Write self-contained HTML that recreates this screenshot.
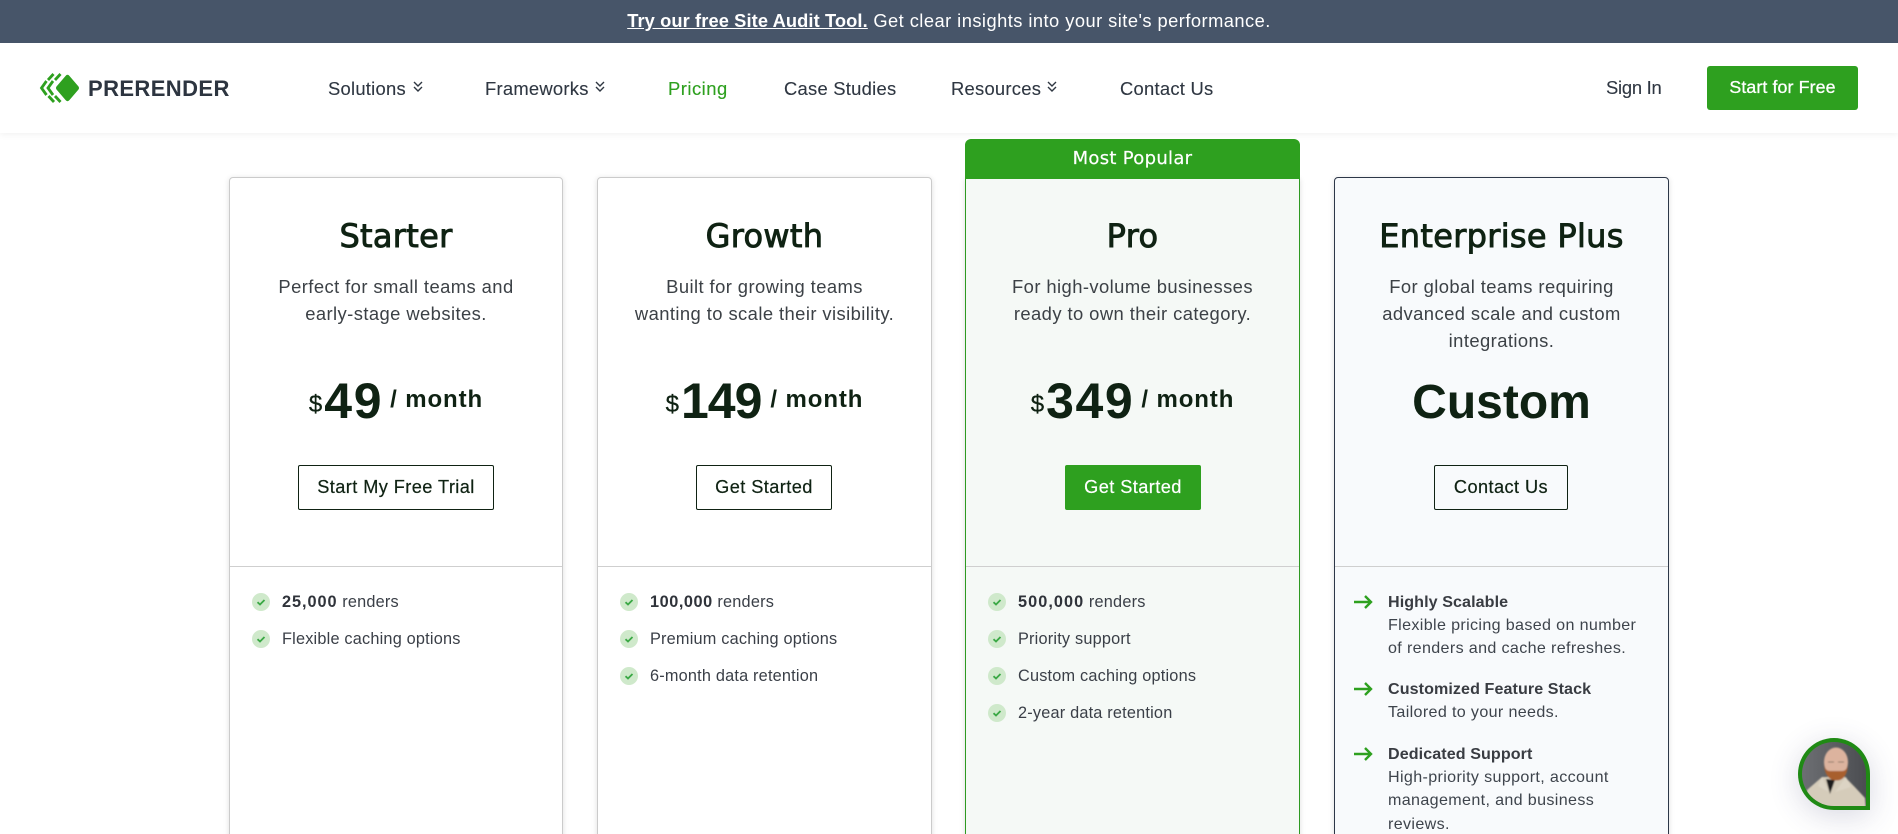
<!DOCTYPE html>
<html lang="en"><head><meta charset="utf-8"><title>Prerender Pricing</title>
<style>
*{box-sizing:border-box;margin:0;padding:0}
html,body{width:1898px;height:834px;background:#fff;font-family:"Liberation Sans",sans-serif}
#page{position:relative;width:1898px;height:834px;overflow:hidden;background:#fff}
a{text-decoration:none;color:inherit}
.banner{position:absolute;left:0;top:0;width:1898px;height:43px;background:#475569;color:#fff;text-align:center;font-size:18.3px;line-height:42px;letter-spacing:.46px}
.banner a{font-weight:700;text-decoration:underline;letter-spacing:.1px}
header{position:absolute;left:0;top:43px;width:1898px;height:90px;background:#fff;box-shadow:0 2px 6px rgba(0,0,0,.05);z-index:3}
header a,header svg,.wordmark{position:absolute}
.wordmark{left:88px;top:33px;font:700 22px/26px "Liberation Sans",sans-serif;color:#2d3540;letter-spacing:.4px}
.nav{top:34px;font-size:18.4px;line-height:24px;color:#2f3742;letter-spacing:.25px;white-space:nowrap;-webkit-text-stroke:.12px #2f3742}
.cta{left:1707px;top:23px;width:151px;height:44px;background:#2ea01f;border-radius:3px;color:#fff;text-align:center;font-size:17.8px;line-height:43px;font-weight:400;-webkit-text-stroke:.3px #fff;letter-spacing:.1px}
.badge{position:absolute;left:965px;top:139px;width:335px;height:40px;background:#2ea01f;border-radius:6px 6px 0 0;color:#fff;text-align:center;font:400 18px/39px "DejaVu Sans",sans-serif;letter-spacing:.3px;-webkit-text-stroke:.2px #fff;z-index:2}
.card{position:absolute;top:177px;width:335px;height:665px;background:#fff;border:1px solid #cbcbcb;border-radius:4px;box-shadow:0 1px 6px rgba(0,0,0,.13);color:#0f2213;text-align:center}
.card.pro{background:#f5f9f6;border-color:#2e9a22;left:965px;width:335px;top:178px;border-radius:0 0 4px 4px;z-index:1}
.card.ent{background:#f8fafc;border-color:#2d3748}
.card>*{position:absolute;left:0;right:0}
h2{top:39px;font:400 32px/38px "DejaVu Sans",sans-serif;letter-spacing:.3px;-webkit-text-stroke:.9px #0f2213;white-space:nowrap}
.desc{top:95px;font-size:18.4px;line-height:27px;color:#3c4146;letter-spacing:.42px}
.price{top:193px;height:60px;display:flex;justify-content:center;align-items:baseline;line-height:60px;white-space:nowrap}
.price .d{font-size:24px;font-weight:400;-webkit-text-stroke:.3px #0f2213;position:relative;top:-6px;margin-right:2px}
.price .n{font-size:50px;font-weight:700;letter-spacing:1.6px;margin-right:7px}
.price .n.t{letter-spacing:-1px;margin-right:9px}
.price .m{font-size:24px;font-weight:700;letter-spacing:.9px;position:relative;top:-11px}
.custom{top:195px;height:60px;font-size:48px;font-weight:700;line-height:60px}
.btn{right:auto;top:287px;height:45px;border:1px solid #0f2213;border-radius:2px;font-size:18.2px;line-height:43px;color:#0f2213;letter-spacing:.42px;white-space:nowrap;text-align:center;-webkit-text-stroke:.2px #0f2213}
.btn.g{background:#2ea01f;border-color:#2ea01f;color:#fff;-webkit-text-stroke:.2px #fff}
hr{top:388px;border:0;border-top:1px solid #cfcfcf;height:0}
ul{top:414px;list-style:none;text-align:left;padding-left:22px}
ul li{height:37px;position:relative;padding-left:30px;font-size:16.3px;line-height:20px;color:#3a3f47;letter-spacing:.2px;white-space:nowrap}
ul li svg{position:absolute;left:0;top:1px}
b{font-weight:700;color:#2f333a;letter-spacing:.95px}
.fe{position:absolute;left:53px;right:0;text-align:left;font-size:16.1px;line-height:23.7px;color:#3e444c;letter-spacing:.35px;white-space:nowrap}
.fe b{color:#393c42;letter-spacing:.08px;position:relative;top:1px}
.ar{position:absolute;right:auto}
.chat{position:absolute;left:1798px;top:738px;width:72px;height:72px;border-radius:50% 50% 0 50%;background:#1f8a14;padding:4px;box-shadow:0 6px 30px rgba(60,60,110,.2);z-index:5}
.chat svg{display:block;border-radius:50% 50% 0 50%}
</style></head><body><div id="page">
<div class="banner"><a href="#">Try our free Site Audit Tool.</a> Get clear insights into your site's performance.</div>
<header>
<svg style="left:0;top:-43px" width="100" height="133" fill="none">
<path d="M67.500 74.800q1 0 2 1.200l9 10.500q1 1.500 0 3l-9 10.500q-1 1.200-2 1.200t-2-1.200l-9-10.500q-1-1.500 0-3l9-10.500q1-1.200 2-1.200z" fill="#2ea01f"/>
<g stroke="#2ea01f" stroke-width="2.800"><path d="M46.500 81l-5 7 5 7M53 81l-5 7 5 7M48 80l5.500-6M55 80l5.500-6M48.500 96l5.500 6M55 96l5.500 6"/></g>
</svg>
<span class="wordmark">PRERENDER</span>
<a class="nav" style="left:328px" href="#">Solutions</a>
<svg style="left:411.500px;top:38px" width="12" height="12" fill="none" stroke="#2f3742" stroke-width="1.400"><path d="M2 1l4 4 4-4M2 6l4 4 4-4"/></svg>
<a class="nav" style="left:485px" href="#">Frameworks</a>
<svg style="left:594px;top:38px" width="12" height="12" fill="none" stroke="#2f3742" stroke-width="1.400"><path d="M2 1l4 4 4-4M2 6l4 4 4-4"/></svg>
<a class="nav" style="left:668px;color:#2ea01f;-webkit-text-stroke:.12px #2ea01f;letter-spacing:.5px" href="#">Pricing</a>
<a class="nav" style="left:784px" href="#">Case Studies</a>
<a class="nav" style="left:951px" href="#">Resources</a>
<svg style="left:1046px;top:38px" width="12" height="12" fill="none" stroke="#2f3742" stroke-width="1.400"><path d="M2 1l4 4 4-4M2 6l4 4 4-4"/></svg>
<a class="nav" style="left:1120px" href="#">Contact Us</a>
<a class="nav" style="left:1606px;top:33px;letter-spacing:-.25px" href="#">Sign In</a>
<a class="cta" href="#">Start for Free</a>
</header>

<section class="card" style="left:229px;width:334px">
<h2>Starter</h2>
<p class="desc">Perfect for small teams and<br>early-stage websites.</p>
<div class="price"><span class="d">$</span><span class="n">49</span><span class="m">/ month</span></div>
<a class="btn" href="#" style="left:68px;width:196px">Start My Free Trial</a>
<hr>
<ul>
<li><svg width="18" height="18"><circle cx="9" cy="9" r="9" fill="#cfe9cb"/><path d="M5.500 9.200l2.500 2.300 4.500-4.500" fill="none" stroke="#3aa845" stroke-width="1.800"/></svg><b>25,000</b> renders</li>
<li><svg width="18" height="18"><circle cx="9" cy="9" r="9" fill="#cfe9cb"/><path d="M5.500 9.200l2.500 2.300 4.500-4.500" fill="none" stroke="#3aa845" stroke-width="1.800"/></svg>Flexible caching options</li>
</ul>
</section>

<section class="card" style="left:597px">
<h2>Growth</h2>
<p class="desc">Built for growing teams<br>wanting to scale their visibility.</p>
<div class="price"><span class="d">$</span><span class="n t">149</span><span class="m">/ month</span></div>
<a class="btn" href="#" style="left:98px;width:136px">Get Started</a>
<hr>
<ul>
<li><svg width="18" height="18"><circle cx="9" cy="9" r="9" fill="#cfe9cb"/><path d="M5.500 9.200l2.500 2.300 4.500-4.500" fill="none" stroke="#3aa845" stroke-width="1.800"/></svg><b style="letter-spacing:.55px">100,000</b> renders</li>
<li><svg width="18" height="18"><circle cx="9" cy="9" r="9" fill="#cfe9cb"/><path d="M5.500 9.200l2.500 2.300 4.500-4.500" fill="none" stroke="#3aa845" stroke-width="1.800"/></svg>Premium caching options</li>
<li><svg width="18" height="18"><circle cx="9" cy="9" r="9" fill="#cfe9cb"/><path d="M5.500 9.200l2.500 2.300 4.500-4.500" fill="none" stroke="#3aa845" stroke-width="1.800"/></svg>6-month data retention</li>
</ul>
</section>

<div class="badge">Most Popular</div>
<section class="card pro">
<h2 style="top:38px">Pro</h2>
<p class="desc" style="top:94px">For high-volume businesses<br>ready to own their category.</p>
<div class="price" style="top:192px"><span class="d">$</span><span class="n">349</span><span class="m">/ month</span></div>
<a class="btn g" href="#" style="top:286px;left:99px;width:136px">Get Started</a>
<hr style="top:387px">
<ul style="top:413px">
<li><svg width="18" height="18"><circle cx="9" cy="9" r="9" fill="#cfe9cb"/><path d="M5.500 9.200l2.500 2.300 4.500-4.500" fill="none" stroke="#3aa845" stroke-width="1.800"/></svg><b style="letter-spacing:1.05px">500,000</b> renders</li>
<li><svg width="18" height="18"><circle cx="9" cy="9" r="9" fill="#cfe9cb"/><path d="M5.500 9.200l2.500 2.300 4.500-4.500" fill="none" stroke="#3aa845" stroke-width="1.800"/></svg>Priority support</li>
<li><svg width="18" height="18"><circle cx="9" cy="9" r="9" fill="#cfe9cb"/><path d="M5.500 9.200l2.500 2.300 4.500-4.500" fill="none" stroke="#3aa845" stroke-width="1.800"/></svg>Custom caching options</li>
<li><svg width="18" height="18"><circle cx="9" cy="9" r="9" fill="#cfe9cb"/><path d="M5.500 9.200l2.500 2.300 4.500-4.500" fill="none" stroke="#3aa845" stroke-width="1.800"/></svg>2-year data retention</li>
</ul>
</section>

<section class="card ent" style="left:1334px">
<h2>Enterprise Plus</h2>
<p class="desc">For global teams requiring<br>advanced scale and custom<br>integrations.</p>
<div class="custom">Custom</div>
<a class="btn" href="#" style="left:99px;width:134px">Contact Us</a>
<hr>
<svg class="ar" style="left:19px;top:416px" width="19" height="16" fill="none" stroke="#2ea01f" stroke-width="2.400"><path d="M0 8h17M11 2l6 6-6 6"/></svg>
<div class="fe" style="top:412px"><b>Highly Scalable</b><br>Flexible pricing based on number<br>of renders and cache refreshes.</div>
<svg class="ar" style="left:19px;top:503px" width="19" height="16" fill="none" stroke="#2ea01f" stroke-width="2.400"><path d="M0 8h17M11 2l6 6-6 6"/></svg>
<div class="fe" style="top:499px"><b>Customized Feature Stack</b><br>Tailored to your needs.</div>
<svg class="ar" style="left:19px;top:568px" width="19" height="16" fill="none" stroke="#2ea01f" stroke-width="2.400"><path d="M0 8h17M11 2l6 6-6 6"/></svg>
<div class="fe" style="top:564px"><b>Dedicated Support</b><br>High-priority support, account<br>management, and business<br>reviews.</div>
</section>

<div class="chat"><svg width="64" height="64" viewBox="0 0 64 64">
<defs><filter id="bl"><feGaussianBlur stdDeviation=".8"/></filter><linearGradient id="bg" x1="0" x2="1"><stop offset="0" stop-color="#6d6f73"/><stop offset="1" stop-color="#4b4d51"/></linearGradient></defs>
<rect width="64" height="64" fill="url(#bg)"/>
<g filter="url(#bl)">
<path d="M3 68L5 48Q12 42 20 35L43 35Q52 44 63 56L64 68z" fill="#d5ccba"/>
<path d="M24 37L33 38 28 52z" fill="#1c1c1e"/>
<path d="M20 35L27 50 16 44zM44 35L33 50 49 45z" fill="#dcd4c4"/>
<ellipse cx="34" cy="20" rx="12" ry="14.500" fill="#dcb39e"/>
<path d="M22 22Q23 38 34 38.500T46 22Q45 29 40 29H28Q23 29 22 22z" fill="#a85f2e"/>
<path d="M26 20h6M36 20h6" stroke="#8c7668" stroke-width="1"/>
</g></svg></div>
</div></body></html>
